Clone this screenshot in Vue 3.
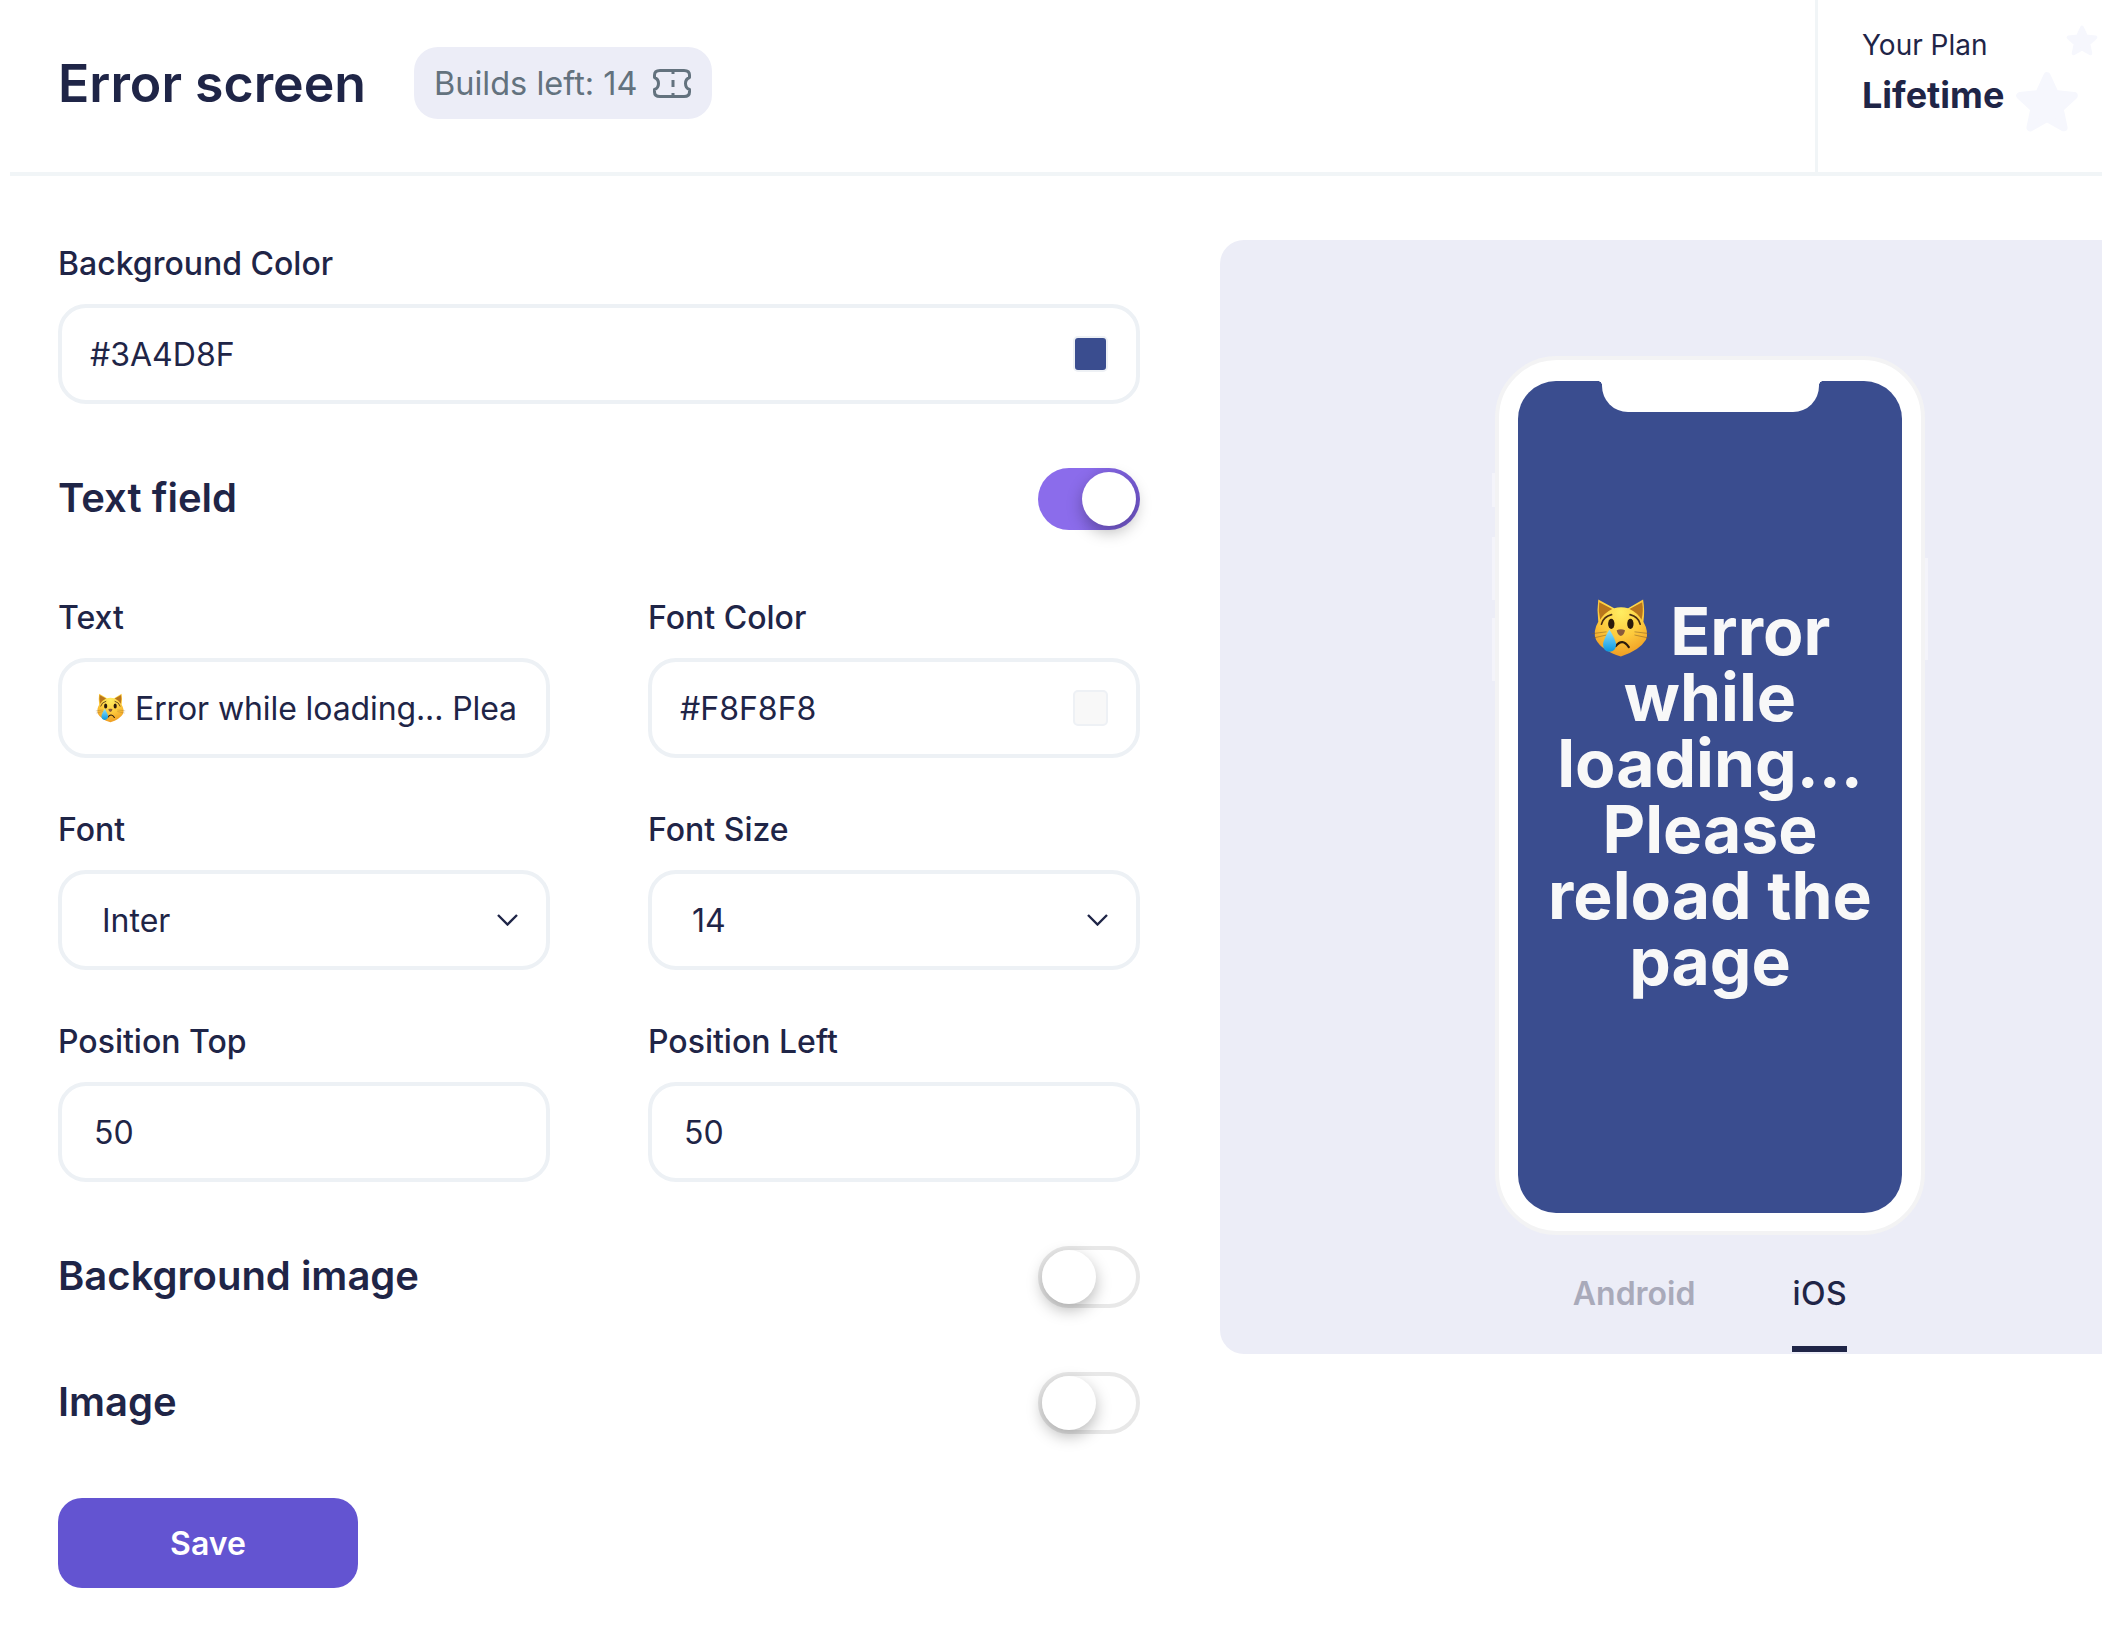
<script setup>
import { ref } from 'vue'

const showText = ref(true)
const showBackground = ref(false)
const showImage = ref(false)
const platform = ref('iOS')
</script>

<template>
  <div class="page">
    <svg class="defs" width="0" height="0">
      <defs>
        <radialGradient id="catFace" cx="50%" cy="22%" r="80%">
          <stop offset="0" stop-color="#ffee62" />
          <stop offset="0.55" stop-color="#fdc93c" />
          <stop offset="1" stop-color="#ee9a22" />
        </radialGradient>
        <linearGradient id="catTear" x1="0" y1="0" x2="0" y2="1">
          <stop offset="0" stop-color="#8fe3ff" />
          <stop offset="1" stop-color="#0a97e0" />
        </linearGradient>
        <symbol id="cat" viewBox="360 775 195 186">
          <path d="M386 778 L436 806 Q457 800 480 806 L527 778 Q533 815 528 848 Q546 880 536 905 Q516 938 457 958 Q396 938 379 905 Q368 878 386 848 Q381 812 386 778Z" fill="url(#catFace)" />
          <path d="M389 787 L430 808 Q405 820 392 842 Q385 815 389 787Z M524 787 L484 808 Q510 820 522 842 Q529 815 524 787Z" fill="#b9761c" />
          <path d="M396 856 Q402 832 428 826 M518 856 Q512 832 486 826" fill="none" stroke="#4a2e12" stroke-width="5" stroke-linecap="round" />
          <ellipse cx="427" cy="855" rx="10" ry="16" fill="#2b1a0c" />
          <ellipse cx="487" cy="855" rx="10" ry="16" fill="#2b1a0c" />
          <path d="M444 875 Q457 869 470 875 Q468 890 457 893 Q446 890 444 875Z" fill="#8a5a3c" />
          <path d="M441 925 Q462 898 482 928" fill="none" stroke="#2b1a0c" stroke-width="7" stroke-linecap="round" />
          <path d="M365 886 L412 880 M368 900 L412 890 M550 886 L500 880 M547 900 L500 890" fill="none" stroke="#7a5a2c" stroke-width="1.6" />
          <path d="M421 873 Q402 905 401 920 Q402 942 421 943 Q441 942 442 920 Q441 905 421 873Z" fill="url(#catTear)" />
        </symbol>
      </defs>
    </svg>

    <header class="top">
      <div class="top-left">
        <h1>Error screen</h1>
        <div class="builds">
          <span>Builds left: 14</span>
          <svg width="38" height="29" viewBox="0 0 38 29" fill="none" stroke="#63727e" stroke-width="3" stroke-linejoin="round">
            <path d="M7 1.5H31Q36.5 1.5 36.5 6V8.5Q32.5 10 32.5 14.5T36.5 20.5V23Q36.5 27.5 31 27.5H7Q1.5 27.5 1.5 23V20.5Q5.5 19 5.5 14.5T1.5 8.5V6Q1.5 1.5 7 1.5Z" />
            <path d="M20 1.5V5M20 11V18M20 24V27.5" />
          </svg>
        </div>
      </div>
      <div class="plan">
        <div class="plan-label">Your Plan</div>
        <div class="plan-name">Lifetime</div>
        <svg class="star star-big" viewBox="0 0 24 24"><path d="M12 3l2.7 5.9 6.3.7-4.7 4.3 1.3 6.3L12 17.1 6.4 20.2l1.3-6.3L3 9.6l6.3-.7z" /></svg>
        <svg class="star star-small" viewBox="0 0 24 24"><path d="M12 3l2.7 5.9 6.3.7-4.7 4.3 1.3 6.3L12 17.1 6.4 20.2l1.3-6.3L3 9.6l6.3-.7z" /></svg>
      </div>
    </header>

    <main class="content">
      <section class="form">
        <div class="field">
          <label>Background Color</label>
          <div class="box">
            <span class="value">#3A4D8F</span>
            <span class="swatch swatch-bg"></span>
          </div>
        </div>

        <div class="switch-row first-switch">
          <h2>Text field</h2>
          <div class="toggle" :class="{ on: showText }" @click="showText = !showText"><span class="knob"></span></div>
        </div>

        <div class="grid">
          <div class="field">
            <label>Text</label>
            <div class="box">
              <span class="value clipped"><svg class="cat-small"><use href="#cat" /></svg>Error while loading... Plea</span>
            </div>
          </div>
          <div class="field">
            <label>Font Color</label>
            <div class="box">
              <span class="value">#F8F8F8</span>
              <span class="swatch swatch-font"></span>
            </div>
          </div>
          <div class="field">
            <label>Font</label>
            <div class="box select">
              <span class="value">Inter</span>
              <svg width="21" height="12" viewBox="0 0 21 12" fill="none" stroke="#1f2547" stroke-width="2.4"><path d="M1 1l9.5 9.5L20 1" /></svg>
            </div>
          </div>
          <div class="field">
            <label>Font Size</label>
            <div class="box select">
              <span class="value">14</span>
              <svg width="21" height="12" viewBox="0 0 21 12" fill="none" stroke="#1f2547" stroke-width="2.4"><path d="M1 1l9.5 9.5L20 1" /></svg>
            </div>
          </div>
          <div class="field">
            <label>Position Top</label>
            <div class="box number"><span class="value">50</span></div>
          </div>
          <div class="field">
            <label>Position Left</label>
            <div class="box number"><span class="value">50</span></div>
          </div>
        </div>

        <div class="switch-row bg-switch">
          <h2>Background image</h2>
          <div class="toggle" :class="{ on: showBackground }" @click="showBackground = !showBackground"><span class="knob"></span></div>
        </div>
        <div class="switch-row image-switch">
          <h2>Image</h2>
          <div class="toggle" :class="{ on: showImage }" @click="showImage = !showImage"><span class="knob"></span></div>
        </div>

        <button class="save">Save</button>
      </section>

      <section class="preview">
        <div class="phone">
          <span class="side side-a"></span>
          <span class="side side-b"></span>
          <span class="side side-c"></span>
          <span class="side side-d"></span>
          <div class="screen">
            <div class="notch"></div>
            <p class="message"><svg class="cat-big"><use href="#cat" /></svg> Error while loading... Please reload the page</p>
          </div>
        </div>
        <div class="tabs">
          <div class="tab" :class="{ active: platform === 'Android' }" @click="platform = 'Android'">Android</div>
          <div class="tab" :class="{ active: platform === 'iOS' }" @click="platform = 'iOS'">iOS</div>
        </div>
      </section>
    </main>
  </div>
</template>

<style>
html,
body {
  margin: 0;
  background: #fff;
}
</style>

<style scoped>
.page {
  width: 2102px;
  height: 1636px;
  overflow: hidden;
  position: relative;
  background: #fff;
  color: #1f2547;
  font-family: Inter, "Liberation Sans", sans-serif;
}

.defs {
  position: absolute;
}

.top {
  display: flex;
  justify-content: space-between;
  height: 172px;
  margin-left: 10px;
  border-bottom: 4px solid #f1f5f7;
}

.top-left {
  display: flex;
  align-items: center;
  padding: 0 0 6px 48px;
  gap: 48px;
}

h1 {
  margin: 0 0 1px;
  font-size: 51.8px;
  font-weight: 600;
  line-height: 60px;
}

.builds {
  display: flex;
  align-items: center;
  gap: 15px;
  height: 72px;
  padding: 0 21px 0 20px;
  border-radius: 24px;
  background: #ecedf7;
  color: #63727e;
  font-size: 32.5px;
}

.plan {
  position: relative;
  box-sizing: border-box;
  width: 287px;
  padding: 27px 0 0 44px;
  border-left: 3px solid #f1f5f7;
  overflow: hidden;
}

.plan-label {
  font-size: 28px;
  line-height: 36px;
}

.plan-name {
  margin-top: 9px;
  font-size: 36px;
  font-weight: 700;
  line-height: 46px;
}

.star {
  position: absolute;
  fill: #f6f7fd;
  stroke: #f6f7fd;
  stroke-width: 2.5;
  stroke-linejoin: round;
}

.star-big {
  width: 72px;
  height: 72px;
  left: 193px;
  top: 67px;
}

.star-small {
  width: 36px;
  height: 36px;
  left: 246px;
  top: 23px;
}

.content {
  display: flex;
  padding-top: 64px;
}

.form {
  width: 1082px;
  margin-left: 58px;
  padding-top: 8px;
  flex: none;
}

.field {
  display: flex;
  flex-direction: column;
  gap: 24px;
}

label {
  font-size: 32px;
  font-weight: 500;
  line-height: 32px;
}

.box {
  display: flex;
  align-items: center;
  justify-content: space-between;
  box-sizing: border-box;
  height: 100px;
  padding: 0 28px;
  background: #fff;
  border: 4px solid #edf1f5;
  border-radius: 28px;
}

.select {
  padding: 0 28px 0 40px;
}

.number {
  padding: 0 28px 0 32px;
}

.value {
  padding-top: 2px;
  font-size: 32px;
  line-height: 40px;
  white-space: nowrap;
}

.clipped {
  display: block;
  letter-spacing: -0.1px;
}

.cat-small {
  display: inline-block;
  width: 31px;
  height: 30px;
  margin: 0 9px 0 5px;
  vertical-align: -3px;
}

.swatch {
  box-sizing: border-box;
  width: 35px;
  height: 36px;
  border: 2px solid #eef1f5;
  border-radius: 5px;
}

.swatch-bg {
  background: #3a4d8f;
}

.swatch-font {
  background: #f8f8f8;
}

.switch-row {
  display: flex;
  align-items: center;
  justify-content: space-between;
}

.first-switch {
  margin-top: 64px;
}

.bg-switch {
  margin-top: 64px;
}

.image-switch {
  margin-top: 64px;
}

h2 {
  margin: 0 0 2px;
  font-size: 40px;
  font-weight: 600;
  line-height: 48px;
}

.toggle {
  display: flex;
  align-items: center;
  box-sizing: border-box;
  width: 102px;
  height: 62px;
  padding: 0 3px;
  background: #fff;
  border: 4px solid #e8e8e8;
  border-radius: 31px;
  cursor: pointer;
}

.toggle.on {
  justify-content: flex-end;
  border: 0;
  background: linear-gradient(100deg, #8b6ceb 45%, #7257cf 100%);
  padding: 0 4px 0 0;
}

.knob {
  width: 54px;
  height: 54px;
  margin-left: -3px;
  border-radius: 50%;
  background: #fff;
  box-shadow: 0 6px 16px rgba(0, 0, 0, 0.28);
}

.toggle.on .knob {
  margin: 0;
}

.grid {
  display: grid;
  grid-template-columns: 492px 492px;
  column-gap: 98px;
  row-gap: 56px;
  margin-top: 72px;
}

.save {
  display: block;
  width: 300px;
  height: 90px;
  margin-top: 64px;
  border: 0;
  border-radius: 24px;
  background: #6354d1;
  color: #fff;
  font-family: inherit;
  font-size: 32px;
  font-weight: 600;
  cursor: pointer;
}

.preview {
  display: flex;
  flex-direction: column;
  align-items: center;
  box-sizing: border-box;
  width: 980px;
  height: 1114px;
  margin-left: 80px;
  padding-top: 116px;
  flex: none;
  background: #ecedf7;
  border-radius: 24px;
}

.phone {
  position: relative;
  box-sizing: border-box;
  width: 430px;
  height: 879px;
  padding: 21px 19px 18px;
  flex: none;
  background: #fff;
  border: 4px solid #f3f3f4;
  border-radius: 62px;
}

.side {
  position: absolute;
  width: 3px;
  background: #f4f4fa;
}

.side-a {
  left: -7px;
  top: 113px;
  height: 34px;
}

.side-b {
  left: -7px;
  top: 177px;
  height: 63px;
}

.side-c {
  left: -7px;
  top: 258px;
  height: 63px;
}

.side-d {
  right: -7px;
  top: 198px;
  height: 102px;
}

.screen {
  position: relative;
  display: flex;
  align-items: center;
  justify-content: center;
  height: 100%;
  background: #3a4d8f;
  border-radius: 38px;
}

.notch {
  position: absolute;
  top: 0;
  left: 84px;
  width: 217px;
  height: 31px;
  background: #fff;
  border-radius: 0 0 26px 26px;
}

.notch::before,
.notch::after {
  content: "";
  position: absolute;
  top: 0;
  width: 4px;
  height: 4px;
}

.notch::before {
  left: -4px;
  background: radial-gradient(circle at 0 100%, #3a4d8f 3.6px, #fff 4px);
}

.notch::after {
  right: -4px;
  background: radial-gradient(circle at 100% 100%, #3a4d8f 3.6px, #fff 4px);
}

.message {
  margin: 0 0 3px;
  padding: 0 24px;
  color: #f8f8f8;
  font-size: 66px;
  font-weight: 700;
  line-height: 66px;
  text-align: center;
}

.cat-big {
  display: inline-block;
  width: 62px;
  height: 60px;
  margin-right: 3px;
  vertical-align: -3px;
}

.tabs {
  display: flex;
  gap: 97px;
  margin-top: 43px;
}

.tab {
  padding-bottom: 36px;
  border-bottom: 6px solid transparent;
  color: #a9aaba;
  font-size: 32px;
  font-weight: 600;
  line-height: 32px;
  cursor: pointer;
}

.tab.active {
  color: #1f2547;
  font-weight: 500;
  letter-spacing: 0.5px;
  border-bottom-color: #1f2547;
}
</style>
